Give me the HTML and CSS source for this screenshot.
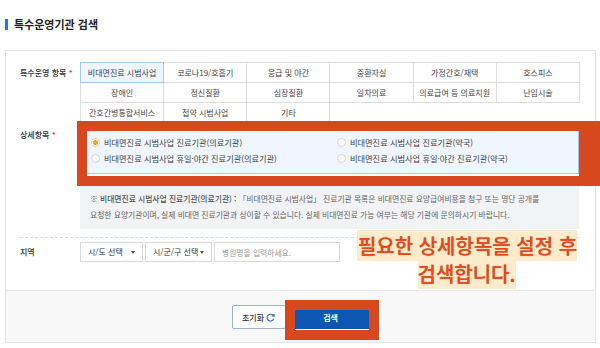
FILE: index.html
```html
<!DOCTYPE html>
<html lang="ko">
<head>
    <meta charset="UTF-8">
    <meta name="viewport" content="width=device-width, initial-scale=1.0">
    <title>특수운영기관 검색</title>
    <link rel="stylesheet" href="styles.css">
</head>
<body>
    <h1 class="title">특수운영기관 검색</h1>

    <div class="form-box">
        <div class="form-body">
            <!-- 특수운영 항목 -->
            <div class="row">
                <div class="label label-top">특수운영 항목 <span class="req">*</span></div>
                <table class="types">
                    <tr>
                        <td class="on">비대면진료 시범사업</td>
                        <td>코로나19/호흡기</td>
                        <td>응급 및 야간</td>
                        <td>중환자실</td>
                        <td>가정간호/재택</td>
                        <td>호스피스</td>
                    </tr>
                    <tr>
                        <td>장애인</td>
                        <td>정신질환</td>
                        <td>심장질환</td>
                        <td>일차의료</td>
                        <td>의료급여 등 의료지원</td>
                        <td>난임시술</td>
                    </tr>
                    <tr>
                        <td>간호간병통합서비스</td>
                        <td>첩약 시범사업</td>
                        <td>기타</td>
                    </tr>
                </table>
            </div>

            <!-- 상세항목 -->
            <div class="row detail-row">
                <div class="label label-detail">상세항목 <span class="req">*</span></div>
                <div>
                    <div class="options">
                        <label class="opt"><span class="radio on"></span>비대면진료 시범사업 진료기관(의료기관)</label>
                        <label class="opt"><span class="radio"></span>비대면진료 시범사업 진료기관(약국)</label>
                        <label class="opt"><span class="radio"></span>비대면진료 시범사업 휴일·야간 진료기관(의료기관)</label>
                        <label class="opt"><span class="radio"></span>비대면진료 시범사업 휴일·야간 진료기관(약국)</label>
                    </div>
                    <div class="note">
                        <b>※ 비대면진료 시범사업 진료기관(의료기관) :</b> 「비대면진료 시범사업」 진료기관 목록은 비대면진료 요양급여비용을 청구 또는 명단 공개를<br>
                        요청한 요양기관이며, 실제 비대면 진료기관과 상이할 수 있습니다. 실제 비대면진료 가능 여부는 해당 기관에 문의하시기 바랍니다.
                    </div>
                </div>
            </div>

            <!-- 지역 -->
            <div class="row region-row">
                <div class="label label-mid">지역</div>
                <div class="region">
                    <div class="select sel-sido">시/도 선택<span class="caret"></span></div>
                    <div class="select sel-gu">시/군/구 선택<span class="caret"></span></div>
                    <input class="search" type="text" placeholder="병원명을 입력하세요.">
                </div>
            </div>
        </div>

        <div class="form-foot">
            <button class="btn-reset">초기화
                <svg width="9" height="9" viewBox="0 0 10 10">
                    <path d="M8.3 3.2A3.8 3.8 0 1 0 8.6 6.4" fill="none" stroke="#2a67c4" stroke-width="1.2"/>
                    <path d="M6.4 3.4L9 3.6 8.8 1" fill="none" stroke="#2a67c4" stroke-width="1.2"/>
                </svg>
            </button>
            <button class="btn-search">검색</button>
        </div>
    </div>

    <!-- 안내 표시 -->
    <div class="mark mark-detail"></div>
    <div class="mark mark-search"></div>
    <div class="callout"><span>필요한 상세항목을 설정 후<br>검색합니다.</span></div>
</body>
</html>
```

FILE: styles.css
```css
body {
    margin: 0;
    font-family: "Noto Sans CJK KR", "Noto Sans", sans-serif;
    color: #444;
    background: #fff;
    overflow: hidden;
    position: relative;
    width: 600px;
    height: 348px;
}
.title {
    margin: 19px 0 0 5px;
    padding-left: 6px;
    border-left: 3px solid #1f78e0;
    font-size: 11px;
    line-height: 11px;
    height: 11px;
    font-weight: 700;
    color: #222;
}
.form-box {
    margin: 20px 4px 0 5px;
    border: 1px solid #e4e4e4;
}
.form-body {
    padding: 11px 16px 0 14px;
}
.row {
    display: grid;
    grid-template-columns: 60px 1fr;
}
.label {
    font-size: 8px;
    color: #333;
    font-weight: 500;
}
.label-top {
    line-height: 21px;
}
.label-detail {
    line-height: 11px;
}
.label-mid {
    line-height: 20px;
}
.req {
    color: #e0301e;
}
.types {
    border-collapse: collapse;
    table-layout: fixed;
    width: 500px;
}
.types td {
    border: 1px solid #dedede;
    height: 19px;
    padding: 0;
    text-align: center;
    font-size: 8px;
    color: #444;
    white-space: nowrap;
}
.types td.on {
    background: #eef5fe;
    border-color: #a9c8ee;
}
.detail-row {
    margin-top: 6px;
}
.options {
    display: grid;
    grid-template-columns: 246px 1fr;
    background: #eff6ff;
    border: 1px solid #a9c6ec;
    padding: 4px 10px 7px;
}
.opt {
    display: flex;
    align-items: center;
    gap: 4px;
    height: 16px;
    font-size: 8.2px;
    color: #444;
}
.radio {
    width: 7px;
    height: 7px;
    border: 1px solid #d2d2d2;
    border-radius: 50%;
    background: #fff;
    position: relative;
}
.radio.on::after {
    content: "";
    position: absolute;
    left: 1px;
    top: 1px;
    width: 5px;
    height: 5px;
    border-radius: 50%;
    background: #f6a70c;
}
.note {
    margin-top: 11px;
    background: #f2f3f5;
    padding: 6px 10px;
    font-size: 7.8px;
    line-height: 16px;
    color: #666;
    white-space: nowrap;
}
.note b {
    color: #555;
    font-weight: 500;
}
.region-row {
    margin-top: 8px;
    border-top: 1px dashed #dcdcdc;
    padding: 4px 0 28px;
}
.region {
    display: flex;
    gap: 2px;
}
.select {
    box-sizing: border-box;
    height: 20px;
    border: 1px solid #dadada;
    font-size: 8px;
    line-height: 18px;
    padding-left: 7px;
    color: #333;
    position: relative;
}
.sel-sido {
    width: 63px;
}
.sel-gu {
    width: 67px;
}
.caret {
    position: absolute;
    right: 7px;
    top: 8px;
    border-left: 2.5px solid transparent;
    border-right: 2.5px solid transparent;
    border-top: 3px solid #555;
}
.search {
    box-sizing: border-box;
    width: 126px;
    height: 20px;
    border: 1px solid #dadada;
    padding: 0 7px;
    font-family: inherit;
    font-size: 7.8px;
    outline: none;
}
.search::placeholder {
    color: #999;
}
.form-foot {
    border-top: 1px solid #e8e8e8;
    background: #f8f8f8;
    padding: 14px 0 13px;
    display: flex;
    justify-content: center;
    gap: 6px;
}
.form-foot button {
    height: 24px;
    font-family: inherit;
    font-size: 8px;
    border-radius: 2px;
    cursor: pointer;
    padding: 0;
}
.btn-reset {
    width: 54px;
    background: #fff;
    border: 1px solid #9fb2d2;
    color: #333;
    font-weight: 500;
    display: flex;
    align-items: center;
    justify-content: center;
    gap: 2px;
}
.btn-search {
    width: 78px;
    background: #0b57b1;
    border: 1px solid #0b57b1;
    color: #fff;
    font-weight: 700;
}
.mark {
    position: absolute;
    box-sizing: border-box;
    border: 10px solid #d8481f;
}
.mark-detail {
    left: 77px;
    top: 121px;
    width: 524px;
    height: 65px;
    border-right-width: 22px;
}
.mark-search {
    left: 285px;
    top: 300px;
    width: 94px;
    height: 40px;
}
.callout {
    position: absolute;
    left: 337px;
    top: 232px;
    width: 260px;
    text-align: center;
    font-size: 20px;
    line-height: 28px;
    font-weight: 500;
    color: #e5491c;
    text-shadow: 0 0 1px rgba(130, 40, 10, 0.6);
}
.callout span {
    background: #fdeccb;
    padding: 1px 1px;
}
```
